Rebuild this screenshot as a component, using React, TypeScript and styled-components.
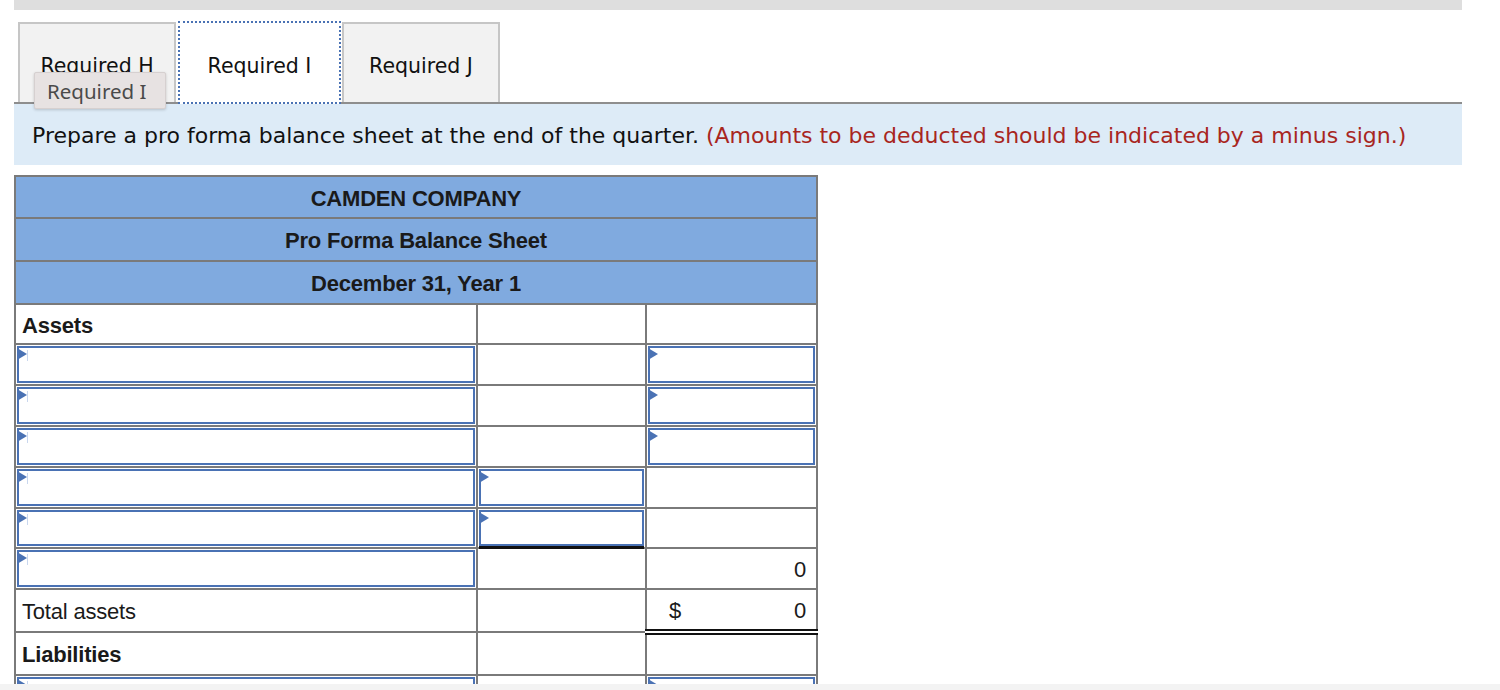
import React from "react";
import styled, { createGlobalStyle } from "styled-components";

const Global = createGlobalStyle`
  html, body { margin: 0; padding: 0; background: #fff; }
  body { overflow: hidden; }
`;

const Page = styled.div`
  height: 684px;
  overflow: hidden;
  padding: 0 38px 0 14px;
  box-sizing: border-box;
`;

const TopBar = styled.div`
  height: 10px;
  background: #dedede;
`;

const TabBar = styled.div`
  position: relative;
  display: flex;
  align-items: flex-end;
  margin-top: 13px;
  padding-left: 4px;
  border-bottom: 2px solid #8e8e8e;
  height: 79px;
`;

const Tab = styled.div<{ $active?: boolean; $gap?: number }>`
  box-sizing: border-box;
  width: ${(p) => (p.$active ? "163px" : "158px")};
  height: ${(p) => (p.$active ? "83px" : "80px")};
  margin-bottom: ${(p) => (p.$active ? "-2px" : "0")};
  margin-left: ${(p) => p.$gap ?? 0}px;
  display: flex;
  align-items: center;
  justify-content: center;
  padding-top: 6px;
  font-family: "DejaVu Sans", Verdana, sans-serif;
  font-size: 20.5px;
  color: #111;
  background: ${(p) => (p.$active ? "#fff" : "#f2f2f2")};
  border: ${(p) => (p.$active ? "2px dotted #4a72b4" : "2px solid #c6c6c6")};
  border-bottom: ${(p) => (p.$active ? "2px dotted #4a72b4" : "none")};
`;

const Tooltip = styled.div`
  position: absolute;
  left: 20px;
  top: 49px;
  width: 132px;
  height: 37px;
  box-sizing: border-box;
  background: #e7e2e2;
  border: 1px solid #d6d0d0;
  border-radius: 2px;
  box-shadow: 0 1px 3px rgba(0, 0, 0, 0.18);
  font-family: "Noto Sans", "Open Sans", sans-serif;
  font-size: 20.5px;
  color: #4a4a4a;
  display: flex;
  align-items: center;
  padding-left: 12px;
`;

const Banner = styled.div`
  height: 61px;
  background: #ddebf7;
  display: flex;
  align-items: center;
  padding-left: 18px;
  padding-top: 2px;
  box-sizing: border-box;
  font-family: "DejaVu Sans", Verdana, sans-serif;
  font-size: 22px;
  color: #111;
  white-space: nowrap;
`;

const Note = styled.span`
  color: #a8261e;
`;

const Sheet = styled.table`
  margin-top: 10px;
  border-collapse: collapse;
  width: 802px;
  table-layout: fixed;
  font-family: "Liberation Sans", Arial, sans-serif;
  font-size: 22px;
  color: #1a1a1a;
`;

const HeadCell = styled.td<{ $h: number }>`
  background: #80aadf;
  border: 2px solid #7a7a7a;
  text-align: center;
  font-weight: bold;
  height: ${(p) => p.$h}px;
  padding: 3px 0 0;
  letter-spacing: -0.2px;
`;

const Row = styled.tr<{ $h: number }>`
  height: ${(p) => p.$h}px;
`;

const Cell = styled.td<{
  $bold?: boolean;
  $topBlack?: boolean;
  $double?: boolean;
}>`
  border: 2px solid #7a7a7a;
  padding: 3px 6px 0;
  font-weight: ${(p) => (p.$bold ? "bold" : "normal")};
  vertical-align: middle;
  letter-spacing: -0.2px;
  ${(p) => (p.$topBlack ? "border-top: 2px solid #111;" : "")}
  ${(p) => (p.$double ? "border-bottom: 6px double #111;" : "")}
`;

const InputCell = styled.td`
  border: 2px solid #7a7a7a;
  padding: 1px 1px 0 1px;
  vertical-align: top;
`;

const InputBox = styled.div<{ $h: number; $underline?: boolean }>`
  position: relative;
  box-sizing: border-box;
  height: ${(p) => p.$h}px;
  border: 2px solid #4a72b4;
  background: #fff;
  ${(p) => (p.$underline ? "box-shadow: 0 3px 0 #111;" : "")}
`;

const Flag = styled.span`
  position: absolute;
  left: -2px;
  top: 0px;
  width: 0;
  height: 0;
  border-top: 6px solid transparent;
  border-bottom: 6px solid transparent;
  border-left: 10px solid #4a72b4;
`;

const Caret = styled.span`
  position: absolute;
  left: 8px;
  top: 2px;
  width: 1px;
  height: 11px;
  background: #c9d7ee;
`;

const Num = styled.div`
  display: flex;
  justify-content: space-between;
  padding: 0 4px 0 16px;
`;

const Footer = styled.div`
  height: 6px;
  background: #f3f3f3;
`;

function Input({ h, caret, underline }: { h: number; caret?: boolean; underline?: boolean }) {
  return (
    <InputBox $h={h} $underline={underline}>
      <Flag />
      {caret && <Caret />}
    </InputBox>
  );
}

type Spec = { h: number; a: boolean; b: boolean; c: boolean };

const inputRows: Spec[] = [
  { h: 41, a: true, b: false, c: true },
  { h: 41, a: true, b: false, c: true },
  { h: 41, a: true, b: false, c: true },
  { h: 41, a: true, b: true, c: false },
  { h: 40, a: true, b: true, c: false },
];

export default function App() {
  return (
    <>
      <Global />
      <Page>
        <TopBar />
        <TabBar>
          <Tab>Required H</Tab>
          <Tab $active $gap={2}>Required I</Tab>
          <Tab $gap={1}>Required J</Tab>
          <Tooltip>Required I</Tooltip>
        </TabBar>
        <Banner>
          Prepare a pro forma balance sheet at the end of the quarter.&nbsp;
          <Note>(Amounts to be deducted should be indicated by a minus sign.)</Note>
        </Banner>
        <Sheet>
          <colgroup>
            <col style={{ width: 462 }} />
            <col style={{ width: 169 }} />
            <col style={{ width: 171 }} />
          </colgroup>
          <tbody>
            <tr>
              <HeadCell colSpan={3} $h={37}>CAMDEN COMPANY</HeadCell>
            </tr>
            <tr>
              <HeadCell colSpan={3} $h={38}>Pro Forma Balance Sheet</HeadCell>
            </tr>
            <tr>
              <HeadCell colSpan={3} $h={38}>December 31, Year 1</HeadCell>
            </tr>
            <Row $h={40}>
              <Cell $bold>Assets</Cell>
              <Cell />
              <Cell />
            </Row>
            {inputRows.map((r, i) => (
              <Row $h={r.h} key={i}>
                {r.a ? (
                  <InputCell>
                    <Input h={r.h - 4} caret />
                  </InputCell>
                ) : (
                  <Cell />
                )}
                {r.b ? (
                  <InputCell>
                    <Input h={r.h - 4} underline={i === 4} />
                  </InputCell>
                ) : (
                  <Cell />
                )}
                {r.c ? (
                  <InputCell>
                    <Input h={r.h - 4} />
                  </InputCell>
                ) : (
                  <Cell />
                )}
              </Row>
            ))}
            <Row $h={41}>
              <InputCell>
                <Input h={37} caret />
              </InputCell>
              <Cell $topBlack />
              <Cell>
                <Num>
                  <span />
                  <span>0</span>
                </Num>
              </Cell>
            </Row>
            <Row $h={43}>
              <Cell>Total assets</Cell>
              <Cell />
              <Cell $topBlack $double>
                <Num>
                  <span>$</span>
                  <span>0</span>
                </Num>
              </Cell>
            </Row>
            <Row $h={43}>
              <Cell $bold>Liabilities</Cell>
              <Cell />
              <Cell />
            </Row>
            <Row $h={41}>
              <InputCell>
                <Input h={37} caret />
              </InputCell>
              <Cell />
              <InputCell>
                <Input h={37} />
              </InputCell>
            </Row>
          </tbody>
        </Sheet>
      </Page>
      <Footer />
    </>
  );
}
